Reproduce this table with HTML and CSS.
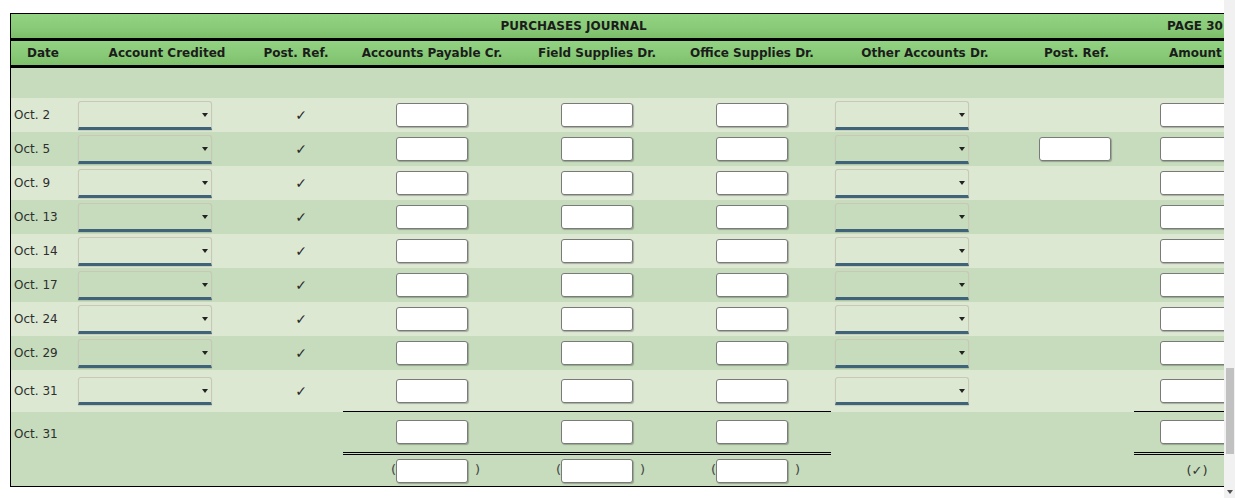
FILE: index.html
```html
<!DOCTYPE html>
<html>
<head>
<meta charset="utf-8">
<link rel="stylesheet" href="styles.css">
</head>
<body>
<div class="page">
  <div class="viewport">
    <div class="journal">
      <div class="row title-row">
        <div class="title">PURCHASES JOURNAL</div>
        <div class="page-no">PAGE 30</div>
      </div>
      <div class="row head">
        <div class="c ctr">Date</div>
        <div class="c ctr">Account Credited</div>
        <div class="c ctr pr">Post. Ref.</div>
        <div class="c ctr">Accounts Payable Cr.</div>
        <div class="c ctr">Field Supplies Dr.</div>
        <div class="c ctr">Office Supplies Dr.</div>
        <div class="c ctr">Other Accounts Dr.</div>
        <div class="c ctr">Post. Ref.</div>
        <div class="c amt-h">Amount</div>
      </div>
      <div class="row blank dark"></div>

      <div class="row light">
        <div class="c date">Oct. 2</div>
        <div class="c acct"><div class="select"></div></div>
        <div class="c ctr chk">✓</div>
        <div class="c ctr"><input class="box" type="text"></div>
        <div class="c ctr"><input class="box" type="text"></div>
        <div class="c ctr"><input class="box" type="text"></div>
        <div class="c other"><div class="select"></div></div>
        <div class="c ctr"></div>
        <div class="c amt"><input class="box" type="text"></div>
      </div>
      <div class="row dark">
        <div class="c date">Oct. 5</div>
        <div class="c acct"><div class="select"></div></div>
        <div class="c ctr chk">✓</div>
        <div class="c ctr"><input class="box" type="text"></div>
        <div class="c ctr"><input class="box" type="text"></div>
        <div class="c ctr"><input class="box" type="text"></div>
        <div class="c other"><div class="select"></div></div>
        <div class="c ctr pr2"><input class="box" type="text"></div>
        <div class="c amt"><input class="box" type="text"></div>
      </div>
      <div class="row light">
        <div class="c date">Oct. 9</div>
        <div class="c acct"><div class="select"></div></div>
        <div class="c ctr chk">✓</div>
        <div class="c ctr"><input class="box" type="text"></div>
        <div class="c ctr"><input class="box" type="text"></div>
        <div class="c ctr"><input class="box" type="text"></div>
        <div class="c other"><div class="select"></div></div>
        <div class="c ctr"></div>
        <div class="c amt"><input class="box" type="text"></div>
      </div>
      <div class="row dark">
        <div class="c date">Oct. 13</div>
        <div class="c acct"><div class="select"></div></div>
        <div class="c ctr chk">✓</div>
        <div class="c ctr"><input class="box" type="text"></div>
        <div class="c ctr"><input class="box" type="text"></div>
        <div class="c ctr"><input class="box" type="text"></div>
        <div class="c other"><div class="select"></div></div>
        <div class="c ctr"></div>
        <div class="c amt"><input class="box" type="text"></div>
      </div>
      <div class="row light">
        <div class="c date">Oct. 14</div>
        <div class="c acct"><div class="select"></div></div>
        <div class="c ctr chk">✓</div>
        <div class="c ctr"><input class="box" type="text"></div>
        <div class="c ctr"><input class="box" type="text"></div>
        <div class="c ctr"><input class="box" type="text"></div>
        <div class="c other"><div class="select"></div></div>
        <div class="c ctr"></div>
        <div class="c amt"><input class="box" type="text"></div>
      </div>
      <div class="row dark">
        <div class="c date">Oct. 17</div>
        <div class="c acct"><div class="select"></div></div>
        <div class="c ctr chk">✓</div>
        <div class="c ctr"><input class="box" type="text"></div>
        <div class="c ctr"><input class="box" type="text"></div>
        <div class="c ctr"><input class="box" type="text"></div>
        <div class="c other"><div class="select"></div></div>
        <div class="c ctr"></div>
        <div class="c amt"><input class="box" type="text"></div>
      </div>
      <div class="row light">
        <div class="c date">Oct. 24</div>
        <div class="c acct"><div class="select"></div></div>
        <div class="c ctr chk">✓</div>
        <div class="c ctr"><input class="box" type="text"></div>
        <div class="c ctr"><input class="box" type="text"></div>
        <div class="c ctr"><input class="box" type="text"></div>
        <div class="c other"><div class="select"></div></div>
        <div class="c ctr"></div>
        <div class="c amt"><input class="box" type="text"></div>
      </div>
      <div class="row dark">
        <div class="c date">Oct. 29</div>
        <div class="c acct"><div class="select"></div></div>
        <div class="c ctr chk">✓</div>
        <div class="c ctr"><input class="box" type="text"></div>
        <div class="c ctr"><input class="box" type="text"></div>
        <div class="c ctr"><input class="box" type="text"></div>
        <div class="c other"><div class="select"></div></div>
        <div class="c ctr"></div>
        <div class="c amt"><input class="box" type="text"></div>
      </div>
      <div class="row light tall">
        <div class="c date">Oct. 31</div>
        <div class="c acct"><div class="select"></div></div>
        <div class="c ctr chk">✓</div>
        <div class="c ctr rule"><input class="box" type="text"></div>
        <div class="c ctr rule"><input class="box" type="text"></div>
        <div class="c ctr rule"><input class="box" type="text"></div>
        <div class="c other"><div class="select"></div></div>
        <div class="c ctr"></div>
        <div class="c amt rule"><input class="box" type="text"></div>
      </div>
      <div class="row dark total">
        <div class="c date">Oct. 31</div>
        <div class="c"></div>
        <div class="c"></div>
        <div class="c ctr drule"><input class="box" type="text"></div>
        <div class="c ctr drule"><input class="box" type="text"></div>
        <div class="c ctr drule"><input class="box" type="text"></div>
        <div class="c"></div>
        <div class="c"></div>
        <div class="c amt drule"><input class="box" type="text"></div>
      </div>
      <div class="row dark last">
        <div class="c"></div>
        <div class="c"></div>
        <div class="c"></div>
        <div class="c ctr"><span class="paren"><input class="box" type="text"></span></div>
        <div class="c ctr"><span class="paren"><input class="box" type="text"></span></div>
        <div class="c ctr"><span class="paren"><input class="box" type="text"></span></div>
        <div class="c"></div>
        <div class="c"></div>
        <div class="c ctr mark">(✓)</div>
      </div>
    </div>
  </div>
  <div class="scrollbar">
    <div class="thumb"></div>
    <div class="arrow"></div>
  </div>
</div>
</body>
</html>
```

FILE: styles.css
```css
html, body {
  margin: 0;
  padding: 0;
  background: #ffffff;
}

.page {
  display: flex;
  width: 1235px;
  height: 498px;
  overflow: hidden;
  font-family: "DejaVu Sans", Verdana, sans-serif;
}

.viewport {
  flex: 0 0 1224px;
  width: 1224px;
  overflow: hidden;
  padding: 13px 0 0 10px;
  box-sizing: border-box;
}

.journal {
  width: 1251px;
  border: 1px solid #000;
  box-sizing: border-box;
  background: #c6dcbc;
}

.row {
  display: grid;
  grid-template-columns: 64px 184px 84px 178px 152px 158px 188px 115px 126px;
  height: 34px;
}

.light { background: #dde8d3; }
.dark { background: #c6dcbc; }

.title-row {
  height: 24px;
  background: linear-gradient(to bottom, #93d384 0%, #89cb78 55%, #7bbd69 100%);
  font-weight: bold;
  font-size: 12px;
  color: #1c1c1c;
  align-items: center;
}

.title {
  grid-column: 1 / 9;
  text-align: center;
  padding-left: 2px;
}

.page-no {
  padding-left: 33px;
  white-space: nowrap;
}

.head {
  height: 30px;
  border-top: 3px solid #000;
  border-bottom: 3px solid #000;
  box-sizing: border-box;
  background: linear-gradient(to bottom, #92d283 0%, #88ca77 55%, #7dbf6b 100%);
}

.head .c {
  font-weight: bold;
  font-size: 12px;
  color: #1c1c1c;
}

.head .pr { padding-right: 10px; }

.amt-h { padding-left: 35px; }

.blank { height: 30px; }

.tall { height: 42px; }
.total { height: 43px; }
.last { height: 31px; }

.c {
  display: flex;
  align-items: center;
  box-sizing: border-box;
  min-width: 0;
  font-size: 12px;
  color: #2e2e2e;
  white-space: nowrap;
}

.ctr { justify-content: center; }

.date { padding-left: 3px; }
.acct { padding-left: 3px; }
.other { padding-left: 4px; }
.amt { padding-left: 26px; }
.pr2 { padding-right: 3px; }

.chk {
  font-size: 14px;
  color: #2a2a2a;
}

.rule { border-bottom: 1px solid #000; }
.drule { border-bottom: 3px double #000; }

.box {
  width: 72px;
  height: 24px;
  box-sizing: border-box;
  margin: 0;
  padding: 0;
  background: #ffffff;
  border: 1px solid #7a7a7a;
  border-radius: 3px;
  box-shadow: 1px 1px 1px rgba(0, 0, 0, 0.25);
}

.select {
  position: relative;
  width: 134px;
  height: 29px;
  box-sizing: border-box;
  border: 1px solid #c9c7b5;
  border-bottom: 3px solid #3f6479;
  border-radius: 3px 3px 0 0;
  box-shadow: 0 1px 1px rgba(0, 0, 0, 0.12);
}

.tall .select { height: 28px; }

.select::after {
  content: "";
  position: absolute;
  right: 3px;
  top: 11px;
  border-left: 3px solid transparent;
  border-right: 3px solid transparent;
  border-top: 4px solid #222;
}

.paren {
  position: relative;
  display: inline-flex;
}

.paren::before,
.paren::after {
  position: absolute;
  top: 3px;
  font-size: 13px;
  color: #444;
}

.paren::before {
  content: "(";
  left: -5px;
}

.paren::after {
  content: ")";
  right: -12px;
}

.mark {
  font-size: 13px;
  color: #333;
}

.scrollbar {
  flex: 0 0 11px;
  display: flex;
  flex-direction: column;
  align-items: center;
  background: #f1f1f1;
}

.thumb {
  margin-top: 368px;
  width: 8px;
  height: 86px;
  background: #c1c1c1;
}

.arrow {
  margin-top: auto;
  margin-bottom: 4px;
  width: 0;
  height: 0;
  border-left: 3px solid transparent;
  border-right: 3px solid transparent;
  border-top: 4px solid #505050;
}
```
